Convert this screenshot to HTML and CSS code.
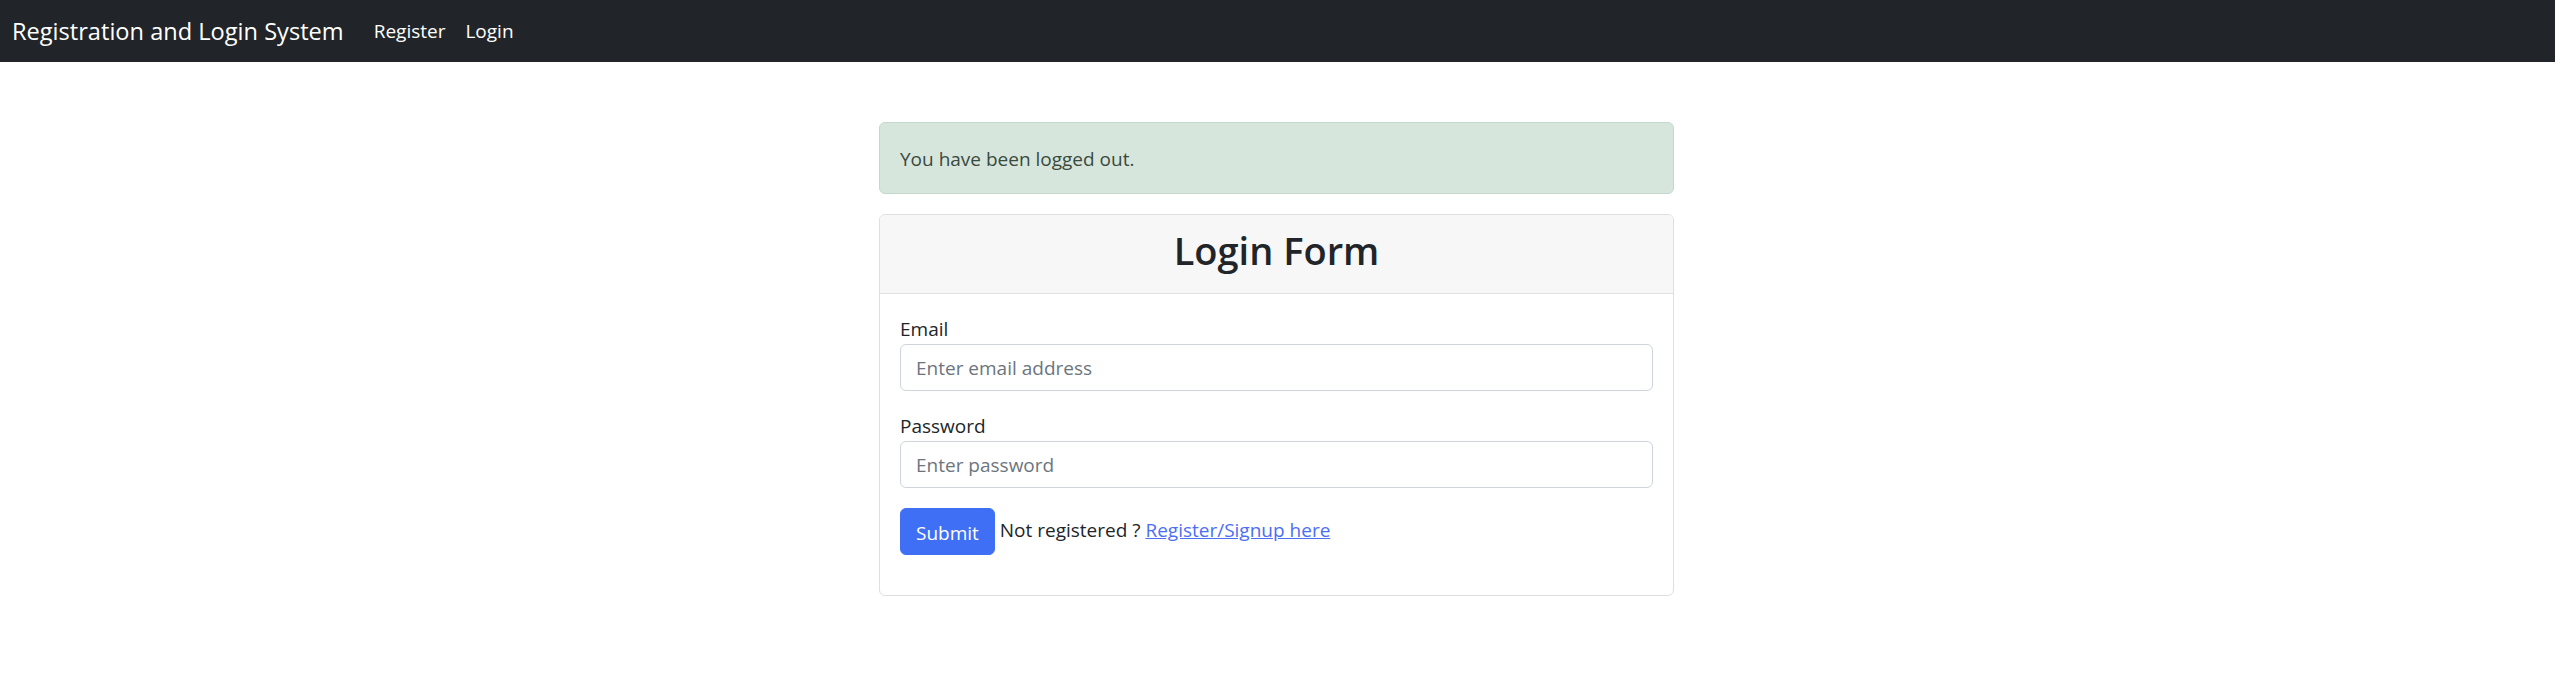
FILE: index.html
```html
<!DOCTYPE html>
<html lang="en">
<head>
<meta charset="utf-8">
<title>Login</title>
<link rel="stylesheet" href="styles.css">
</head>
<body>
<nav class="navbar">
  <a class="brand" href="#">Registration and Login System</a>
  <ul class="nav-links">
    <li><a href="#">Register</a></li>
    <li><a href="#">Login</a></li>
  </ul>
</nav>
<main class="page">
  <div class="alert">You have been logged out.</div>
  <section class="card">
    <div class="card-header"><h2>Login Form</h2></div>
    <form class="card-body">
      <div class="group">
        <label for="email">Email</label>
        <input id="email" type="email" placeholder="Enter email address">
      </div>
      <div class="group">
        <label for="password">Password</label>
        <input id="password" type="password" placeholder="Enter password">
      </div>
      <div class="group">
        <button type="submit" class="btn">Submit</button>
        <span>Not registered ? <a href="#" class="link">Register/Signup here</a></span>
      </div>
    </form>
  </section>
</main>
</body>
</html>
```
FILE: styles.css
```css
* { box-sizing: border-box; }

html, body {
  margin: 0;
  padding: 0;
  background: #ffffff;
}

body {
  font-family: "Open Sans", "Noto Sans", sans-serif;
  font-size: 19px;
  line-height: 30px;
  color: #212529;
}

.navbar {
  height: 62px;
  background: #212529;
  display: flex;
  align-items: center;
  padding: 0 12px;
}

.brand {
  font-size: 23.6px;
  color: #ffffff;
  text-decoration: none;
  margin-right: 20px;
  line-height: 36px;
}

.nav-links {
  list-style: none;
  margin: 0;
  padding: 0;
  display: flex;
}

.nav-links a {
  display: block;
  padding: 0 10px;
  color: #ffffff;
  text-decoration: none;
  font-size: 19px;
  line-height: 30px;
}

.page {
  width: 797px;
  padding-right: 2px;
  margin: 60px auto 0;
}

.alert {
  background: #d6e6dc;
  border: 1px solid #c3dacb;
  color: #3a4a3e;
  border-radius: 6px;
  padding: 21px 20px 19px;
  margin-bottom: 20px;
}

.card {
  border: 1px solid #dfdfdf;
  border-radius: 6px;
  background: #ffffff;
  overflow: hidden;
}

.card-header {
  background: #f7f7f7;
  border-bottom: 1px solid #dfdfdf;
  padding: 10px 20px;
}

.card-header h2 {
  margin: 0 0 10px;
  padding-top: 3px;
  font-size: 38px;
  line-height: 45px;
  font-weight: 600;
  text-align: center;
  color: #212529;
}

.card-body {
  padding: 20px;
  margin: 0;
}

.group {
  margin-bottom: 20px;
}

.group label {
  display: inline-block;
  padding-top: 1px;
  line-height: 29px;
}

.group input {
  display: block;
  width: 100%;
  height: 47px;
  padding: 7px 15px;
  font: inherit;
  line-height: 30px;
  color: #212529;
  border: 1px solid #ced4da;
  border-radius: 6px;
  background: #ffffff;
}

.group input::placeholder {
  color: #6c757d;
}

.btn {
  display: inline-block;
  vertical-align: middle;
  height: 47px;
  padding: 8px 15px 6px;
  font: inherit;
  line-height: 30px;
  color: #ffffff;
  background: #3f6ff5;
  border: 1px solid #3f6ff5;
  border-radius: 6px;
  cursor: pointer;
}

.link {
  color: #4c6ef5;
  text-decoration: underline;
}
```
